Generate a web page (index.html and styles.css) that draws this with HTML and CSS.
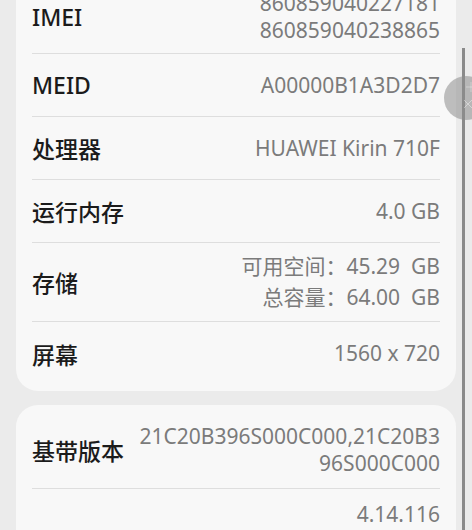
FILE: index.html
```html
<!DOCTYPE html>
<html lang="zh">
<head>
<meta charset="utf-8">
<link rel="stylesheet" href="styles.css">
</head>
<body>
<div class="page">
  <div class="card">
    <div class="row row-imei">
      <div class="label">IMEI</div>
      <div class="value"><div>860859040227181</div><div>860859040238865</div></div>
    </div>
    <div class="row">
      <div class="label">MEID</div>
      <div class="value">A00000B1A3D2D7</div>
    </div>
    <div class="row">
      <div class="label">处理器</div>
      <div class="value">HUAWEI Kirin 710F</div>
    </div>
    <div class="row">
      <div class="label">运行内存</div>
      <div class="value">4.0 GB</div>
    </div>
    <div class="row row-storage">
      <div class="label">存储</div>
      <div class="value cjk"><div>可用空间：45.29&nbsp; GB</div><div>总容量：64.00&nbsp; GB</div></div>
    </div>
    <div class="row">
      <div class="label">屏幕</div>
      <div class="value">1560 x 720</div>
    </div>
  </div>
  <div class="card card-second">
    <div class="row row-baseband">
      <div class="label">基带版本</div>
      <div class="value"><div>21C20B396S000C000,21C20B3</div><div>96S000C000</div></div>
    </div>
    <div class="row row-last">
      <div class="label"></div>
      <div class="value">4.14.116</div>
    </div>
  </div>
</div>
<div class="scrollbar"></div>
<div class="fab">
  <svg class="fab-icon" width="44" height="44" viewBox="0 0 44 44">
    <path d="M27 6 V16 M22 11 H32" stroke="rgba(255,255,255,0.35)" stroke-width="1" fill="none"/>
    <path d="M20 24 L28 32 M28 24 L20 32" stroke="rgba(255,255,255,0.4)" stroke-width="1" fill="none"/>
  </svg>
</div>
</body>
</html>
```
FILE: styles.css
```css
html, body {
  margin: 0;
  padding: 0;
  background: #ebebeb;
  overflow: hidden;
  height: 530px;
}
body {
  font-family: "Noto Sans", "Noto Sans CJK SC", sans-serif;
  position: relative;
}
.page {
  margin-top: -20px;
  padding: 0 16px;
}
.card {
  background: #f8f8f8;
  border-radius: 22px;
  padding: 0 16px 6px;
}
.card-second {
  margin-top: 14px;
  padding-top: 6px;
}
.row {
  display: flex;
  align-items: center;
  justify-content: space-between;
  min-height: 63px;
  border-bottom: 1px solid #dedede;
  box-sizing: border-box;
}
.row:last-child {
  border-bottom: none;
}
.row-imei {
  min-height: 74px;
}
.row-storage {
  min-height: 79px;
}
.row-baseband {
  min-height: 78px;
}
.row-last {
  align-items: flex-start;
  padding-top: 12px;
}
.label {
  font-size: 23px;
  font-weight: 500;
  color: #1b1b1b;
  white-space: nowrap;
}
.value {
  font-size: 21px;
  color: #7b7b7b;
  text-align: right;
  line-height: 27px;
  white-space: nowrap;
}
.value.cjk {
  line-height: 31px;
}
.scrollbar {
  position: absolute;
  left: 462px;
  top: 48px;
  width: 3px;
  height: 482px;
  background: #8a8a8a;
}
.fab {
  position: absolute;
  left: 444px;
  top: 76px;
  width: 44px;
  height: 44px;
  border-radius: 50%;
  background: rgba(140, 140, 140, 0.55);
}
.fab-icon {
  display: block;
}
```
